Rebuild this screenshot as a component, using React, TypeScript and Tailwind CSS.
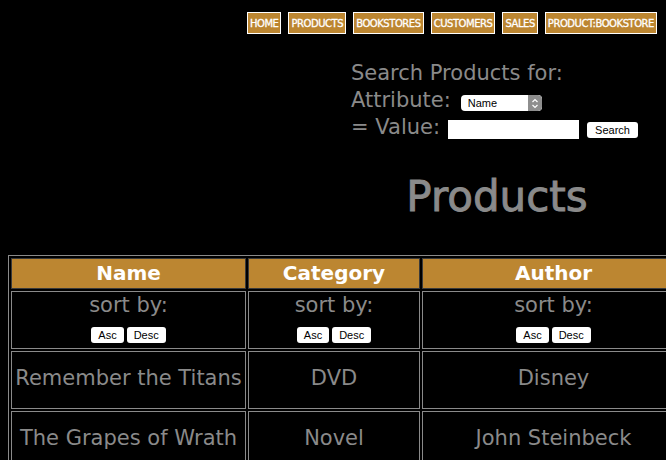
import React from "react";

const navItems = ["HOME", "PRODUCTS", "BOOKSTORES", "CUSTOMERS", "SALES", "PRODUCT:BOOKSTORE"];

function SmallBtn({ children }: { children: React.ReactNode }) {
  return (
    <span className="inline-flex items-center justify-center h-[16px] px-[7px] bg-white rounded-[3px] text-black text-[11px] leading-none" style={{ fontFamily: "'Liberation Sans', Arial, sans-serif" }}>
      {children}
    </span>
  );
}

function SortCell() {
  return (
    <td className="border border-[#8a8a8a] text-center align-top p-0">
      <div className="text-[21px] leading-[24px] pt-[1px] text-[#8a8a8a]">sort by:</div>
      <div className="flex justify-center gap-[3px] mt-[10px] mb-[5px]">
        <SmallBtn>Asc</SmallBtn>
        <SmallBtn>Desc</SmallBtn>
      </div>
    </td>
  );
}

const rows = [
  ["Remember the Titans", "DVD", "Disney"],
  ["The Grapes of Wrath", "Novel", "John Steinbeck"],
];

export default function App() {
  return (
    <div className="w-[666px] h-[460px] overflow-hidden bg-black p-2" style={{ fontFamily: "'DejaVu Sans', sans-serif" }}>
      <div className="flex justify-end gap-[7px] mt-[4px] pr-[1px]">
        {navItems.map((n) => (
          <span key={n} className="h-[22px] px-[2px] flex items-center border border-white bg-[#bc8631] text-white text-[10px] tracking-[-0.45px] [-webkit-text-stroke:0.3px_white]">
            {n}
          </span>
        ))}
      </div>
      <div className="ml-[343px] mt-[26px] text-[#8a8a8a] text-[21px] leading-[27px]">
        <div className="h-[27px]">Search Products for:</div>
        <div className="h-[27px] flex items-start">
          <span>Attribute:</span>
          <span className="ml-[10px] mt-[8px] w-[81px] h-[16px] bg-white rounded-[4px] flex items-center overflow-hidden">
            <span className="flex-1 pl-[7px] text-black text-[11px] leading-none" style={{ fontFamily: "'Liberation Sans', Arial, sans-serif" }}>Name</span>
            <span className="w-[14px] h-full bg-[#8e8e8e] flex items-center justify-center rounded-r-[4px]">
              <svg width="8" height="11" viewBox="0 0 8 11">
                <path d="M1.5 4 L4 1.5 L6.5 4" fill="none" stroke="white" strokeWidth="1.2" />
                <path d="M1.5 7 L4 9.5 L6.5 7" fill="none" stroke="white" strokeWidth="1.2" />
              </svg>
            </span>
          </span>
        </div>
        <div className="h-[27px] flex items-start">
          <span>= Value:</span>
          <span className="ml-[8px] mt-[6px] w-[131px] h-[19px] bg-white" />
          <span className="ml-[8px] mt-[8px] flex items-center justify-center h-[16px] w-[51px] bg-white rounded-[3px] text-black text-[11px] leading-none" style={{ fontFamily: "'Liberation Sans', Arial, sans-serif" }}>Search</span>
        </div>
      </div>
      <div className="ml-[328px] text-center mt-[26px] text-[#8a8a8a] text-[42px] leading-[60px] [-webkit-text-stroke:0.9px_#8a8a8a]">Products</div>
      <table className="mt-[28px] border-separate border-spacing-[2px] border border-[#8a8a8a] w-[680px] table-fixed">
        <colgroup>
          <col className="w-[235px]" />
          <col className="w-[172px]" />
          <col className="w-[263px]" />
        </colgroup>
        <thead>
          <tr>
            {["Name", "Category", "Author"].map((h) => (
              <th key={h} className="h-[31px] border border-[#3a3a3a] bg-[#bc8631] text-white text-[20px] font-bold p-0 leading-[27px]">{h}</th>
            ))}
          </tr>
        </thead>
        <tbody>
          <tr>
            <SortCell />
            <SortCell />
            <SortCell />
          </tr>
          {rows.map((r, i) => (
            <tr key={i}>
              {r.map((c, j) => (
                <td key={j} className="h-[58px] border border-[#8a8a8a] text-center text-[#8a8a8a] text-[21px] p-0 pb-[3px] whitespace-nowrap">{c}</td>
              ))}
            </tr>
          ))}
        </tbody>
      </table>
    </div>
  );
}
